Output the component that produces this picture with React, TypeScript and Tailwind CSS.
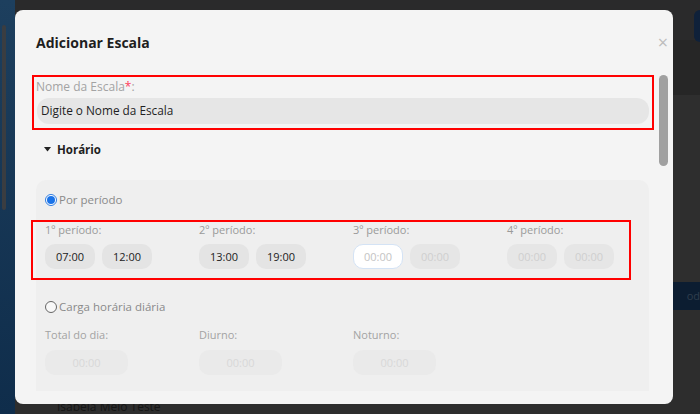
import React from "react"

const periods = [
  { label: "1º período:", values: ["07:00", "12:00"] },
  { label: "2º período:", values: ["13:00", "19:00"] },
  { label: "3º período:", values: ["", ""] },
  { label: "4º período:", values: ["", ""] },
]

const totals = ["Total do dia:", "Diurno:", "Noturno:"]

function Radio({ checked }: { checked?: boolean }) {
  if (checked) {
    return (
      <span className="flex h-[12px] w-[12px] items-center justify-center rounded-full border border-[#2f7de1] bg-white">
        <span className="h-[8px] w-[8px] rounded-full bg-[#1a73e8]" />
      </span>
    )
  }
  return <span className="h-[12px] w-[12px] rounded-full border border-[#666] bg-[#f8f8f8]" />
}

function TimeBox({ value, focus }: { value: string; focus?: boolean }) {
  if (value) {
    return (
      <div className="flex h-[25px] w-[50px] items-center justify-center rounded-[10px] bg-[#e4e4e4] text-[11px] text-[#222]">
        {value}
      </div>
    )
  }
  if (focus) {
    return (
      <div className="flex h-[25px] w-[50px] items-center justify-center rounded-[10px] border border-[#d4e3f5] bg-white text-[11px] text-[#c4c4c4]">
        00:00
      </div>
    )
  }
  return (
    <div className="flex h-[25px] w-[50px] items-center justify-center rounded-[10px] bg-[#e6e6e6] text-[11px] text-[#cfcfcf]">
      00:00
    </div>
  )
}

export default function App() {
  return (
    <div
      className="relative flex h-[414px] w-[700px] overflow-hidden bg-[#2c2c2c]"
      style={{ fontFamily: '"Open Sans", "Noto Sans", sans-serif' }}
    >
      {/* page behind the overlay */}
      <div className="flex w-[15px] flex-col bg-gradient-to-b from-[#1d3f5e] to-[#0f2d4b]">
        <div className="ml-[2px] mt-[25px] h-[185px] w-[4px] rounded bg-[#3a3d41]" />
      </div>
      <div className="flex flex-1 flex-col">
        <div className="h-[40px] bg-[#2a2a2b]" />
        <div className="h-[55px] bg-[#262626]" />
        <div className="h-[187px] bg-[#2e2e2e]" />
        <div className="flex h-[28px] items-center justify-end bg-[#0c1d31] text-[11px] text-[#2f3d4d]">
          od
        </div>
        <div className="flex flex-1 items-end bg-[#2d2d2d] pl-[42px]">
          <span className="text-[12px] leading-[14px] text-[#151515]">Isabela Melo Teste</span>
        </div>
      </div>
      <div className="absolute right-[-8px] top-[10px] h-[32px] w-[14px] rounded-[6px] bg-[#0f213a]" />

      {/* modal */}
      <div className="absolute left-[15px] top-[10px] flex h-[394px] w-[658px] flex-col rounded-[8px] bg-[#f4f4f4]">
        <div className="flex h-[55px] items-start justify-between pl-[21px] pr-[5px] pt-[23px]">
          <h2 className="text-[14px] font-bold leading-[20px] text-[#1e1e1e]">Adicionar Escala</h2>
          <span className="text-[18px] leading-[18px] text-[#bdbdbd]">×</span>
        </div>

        <div className="flex flex-1 overflow-hidden">
          <div className="flex w-[636px] flex-col pl-[17px] pt-[10px]">
            <div className="w-[622px] border-2 border-[#ff0000] px-[2px] pb-[4px] pt-[2px]">
              <div className="text-[12px] leading-[16px] text-[#a3a3a3]">
                Nome da Escala<span className="text-[#ff3b5c]">*</span>:
              </div>
              <div className="mx-[1px] mt-[3px] flex h-[26px] items-center rounded-[12px] bg-[#e6e6e6] px-[4px] text-[11.8px] text-[#1f1f1f]">
                Digite o Nome da Escala
              </div>
            </div>

            <div className="ml-[12px] mt-[11px] flex items-center gap-[6px] text-[11.5px] font-bold text-[#1e1e1e]">
              <svg width="7" height="5" viewBox="0 0 7 5">
                <path d="M0 0h7L3.5 4.5z" fill="#222" />
              </svg>
              Horário
            </div>

            <div className="ml-[4px] mt-[22px] flex h-[211px] w-[613px] flex-col rounded-t-[10px] bg-[#efefef] pl-[9px] pt-[13px]">
              <div className="flex items-center gap-[2px] text-[11.5px] leading-[14px] text-[#8a8a8a]">
                <Radio checked />
                Por período
              </div>

              <div className="-ml-[14px] mt-[13px] grid h-[60px] w-[600px] grid-cols-[154px_154px_154px_1fr] border-2 border-[#ff0000] pl-[12px] pt-[1px]">
                {periods.map((p, i) => (
                  <div key={p.label} className="flex flex-col">
                    <div className="text-[11px] leading-[14px] text-[#9a9a9a]">{p.label}</div>
                    <div className="mt-[7px] flex gap-[7px]">
                      <TimeBox value={p.values[0]} focus={i === 2} />
                      <TimeBox value={p.values[1]} />
                    </div>
                  </div>
                ))}
              </div>

              <div className="mt-[20px] flex items-center gap-[2px] text-[11.5px] leading-[14px] text-[#8a8a8a]">
                <Radio />
                Carga horária diária
              </div>

              <div className="mt-[14px] grid grid-cols-[154px_154px_154px]">
                {totals.map((t) => (
                  <div key={t} className="flex flex-col">
                    <div className="text-[11px] leading-[14px] text-[#a3a3a3]">{t}</div>
                    <div className="mt-[8px] flex h-[25px] w-[83px] items-center justify-center rounded-[10px] bg-[#eaeaea] text-[11px] text-[#d8d8d8]">
                      00:00
                    </div>
                  </div>
                ))}
              </div>
            </div>
          </div>
          <div className="ml-[8px] mt-[10px] h-[91px] w-[9px] rounded-[5px] bg-[#a0a0a0]" />
        </div>
      </div>
    </div>
  )
}
